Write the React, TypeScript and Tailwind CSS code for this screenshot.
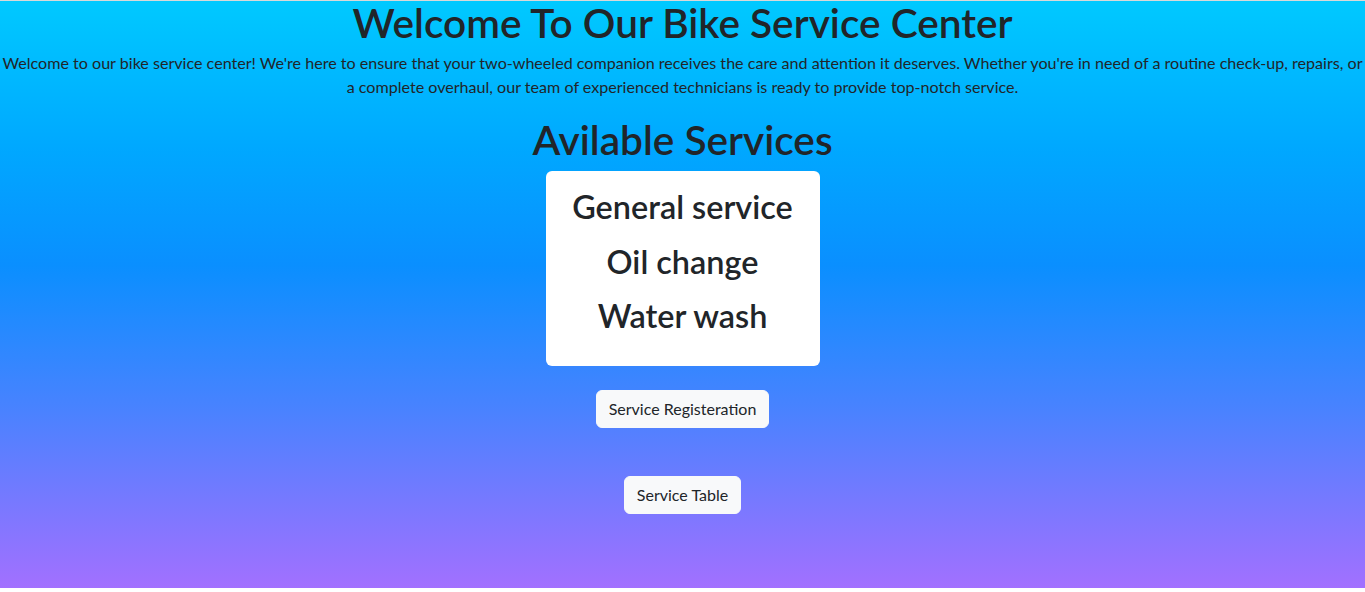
export default function App() {
  const services = ['General service', 'Oil change', 'Water wash']

  return (
    <div className="bg-white pb-[4px]" style={{ fontFamily: 'Lato, "Open Sans", sans-serif' }}>
      <div className="min-h-[588px] border-t border-[#d9d9d9] bg-[linear-gradient(180deg,#00c9ff_0%,#00a8ff_25%,#0a8fff_45%,#4a82ff_70%,#a270ff_100%)] text-[#212529] flex flex-col items-center text-center">
        <h1 className="text-[40.6px] font-semibold leading-[44px] mt-0">Welcome To Our Bike Service Center</h1>
        <p className="text-[16.1px] leading-[24px] mt-[6px] px-0.5">
          Welcome to our bike service center! We're here to ensure that your two-wheeled companion receives the care and attention it deserves. Whether you're in need of a routine check-up, repairs, or a complete overhaul, our team of experienced technicians is ready to provide top-notch service.
        </p>

        <h2 className="text-[40.6px] font-semibold leading-[46px] mt-[18px]">Avilable Services</h2>

        <div className="w-[274px] bg-white rounded-md mt-[8px] pt-[9px] pb-[22px]">
          {services.map(s => (
            <h3 key={s} className="text-[32.4px] font-semibold leading-[54.5px]">{s}</h3>
          ))}
        </div>

        <button className="mt-[24px] bg-[#f8f9fa] border border-[#f8f9fa] rounded-md px-3 py-1.5 text-[16px] leading-[24px] text-[#212529]">
          Service Registeration
        </button>

        <button className="mt-[48px] bg-[#f8f9fa] border border-[#f8f9fa] rounded-md px-3 py-1.5 text-[16px] leading-[24px] text-[#212529]">
          Service Table
        </button>
      </div>
    </div>
  )
}
